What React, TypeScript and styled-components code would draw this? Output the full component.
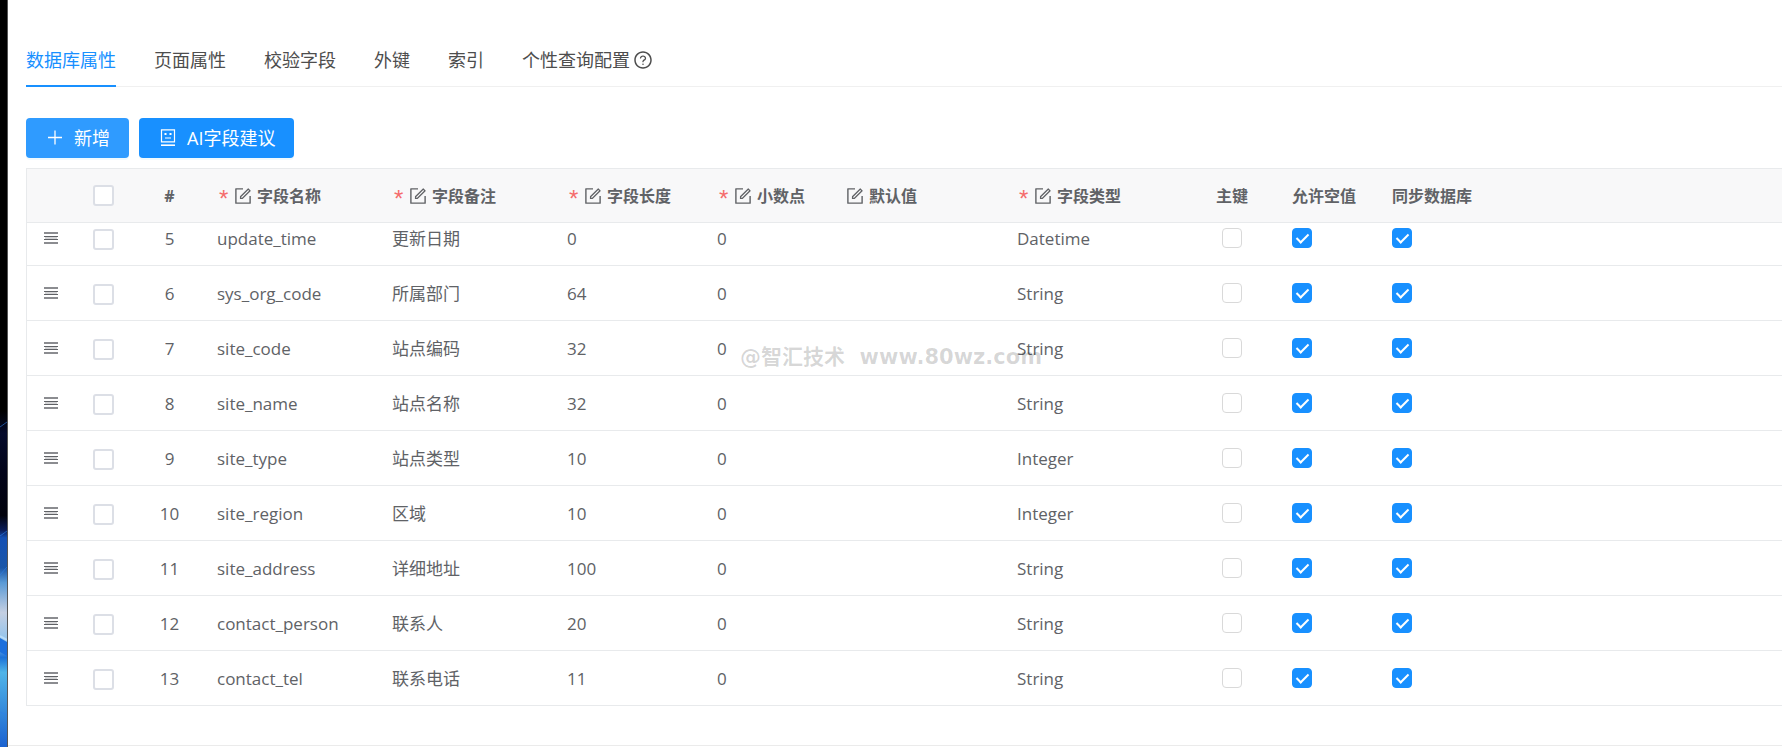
import React from "react";
import styled, { createGlobalStyle } from "styled-components";
import { AiOutlineQuestionCircle, AiOutlineForm } from "react-icons/ai";

const BLUE = "#1890ff";
const LINE = "#e8eaec";

const GlobalStyle = createGlobalStyle`
  *, *::before, *::after { box-sizing: border-box; }
  body {
    margin: 0;
    background: #fff;
    color: #606266;
    font-family: "Open Sans", "Noto Sans CJK SC", sans-serif;
    font-size: 17px;
    line-height: 24px;
    overflow-x: hidden;
  }
`;

const Page = styled.div`
  display: flex;
  min-height: 100vh;
`;

const Wallpaper = styled.aside`
  flex: none;
  width: 8px;
  border-right: 1px solid #555;
  background: #000;
  svg { display: block; width: 100%; height: 100vh; }
`;

const Panel = styled.main`
  position: relative;
  flex: 1;
  min-width: 0;
  padding: 36px 0 39px 18px;
  margin-bottom: 1px;
  border-bottom: 1px solid #ebebeb;
`;

const Tabs = styled.nav`
  display: flex;
  gap: 38px;
  border-bottom: 1px solid #f0f0f0;
  margin-bottom: 31px;
`;

const Tab = styled.button<{ $active?: boolean }>`
  display: flex;
  align-items: center;
  gap: 3px;
  height: 51px;
  margin-bottom: -1px;
  padding: 0 0 2px;
  border: 0;
  border-bottom: 2px solid ${(p) => (p.$active ? BLUE : "transparent")};
  background: none;
  color: ${(p) => (p.$active ? BLUE : "#4d4d4d")};
  font: inherit;
  font-size: 18px;
  white-space: nowrap;
  cursor: pointer;
`;

const Toolbar = styled.div`
  display: flex;
  gap: 10px;
  margin-bottom: 10px;
`;

const Button = styled.button<{ $hover?: boolean }>`
  display: flex;
  align-items: center;
  gap: 10px;
  height: 40px;
  padding: 0 19px 0 20px;
  border: 0;
  border-radius: 4px;
  background: ${(p) => (p.$hover ? "#2f9bff" : BLUE)};
  box-shadow: 0 2px 0 rgba(5, 175, 255, 0.06);
  color: #fff;
  font: inherit;
  font-size: 18px;
  white-space: nowrap;
  cursor: pointer;
`;

const TableFrame = styled.div`
  border: 1px solid ${LINE};
  border-width: 1px 0 0 1px;
  overflow: hidden;
`;

const Table = styled.table`
  width: 100%;
  table-layout: fixed;
  border-collapse: separate;
  border-spacing: 0;
`;

const HeadCell = styled.th<{ $center?: boolean }>`
  height: 54px;
  padding: 0 10px;
  border-bottom: 1px solid ${LINE};
  background: #f8f8f9;
  font-size: 16px;
  font-weight: 700;
  text-align: ${(p) => (p.$center ? "center" : "left")};
  white-space: nowrap;
`;

const HeadLabel = styled.span`
  display: flex;
  align-items: center;
  gap: 4px;
`;

const Star = styled.span`
  width: 12px;
  height: 12px;
  padding-left: 2px;
  color: #f56c6c;
  font-family: "Liberation Sans", sans-serif;
  font-weight: 400;
  font-size: 24px;
  line-height: 18px;
`;

/* The first row is partly scrolled under the header. */
const Row = styled.tr<{ $scrolled?: boolean }>`
  td {
    height: ${(p) => (p.$scrolled ? 43 : 55)}px;
    padding-bottom: ${(p) => (p.$scrolled ? 12 : 0)}px;
  }
`;

const Cell = styled.td<{ $center?: boolean }>`
  padding: 2px 10px 0;
  border-bottom: 1px solid ${LINE};
  text-align: ${(p) => (p.$center ? "center" : "left")};
  white-space: nowrap;
`;

const ControlCell = styled(Cell)`
  padding-top: 0;
  svg { display: block; margin: 0 auto; }
`;

const Select = styled.input`
  appearance: none;
  display: block;
  width: 21px;
  height: 21px;
  margin: 0 auto;
  border: 2px solid #dcdfe6;
  border-radius: 3px;
  background: #fff;
`;

const Check = styled.input<{ $center?: boolean }>`
  appearance: none;
  display: grid;
  place-items: center;
  width: 20px;
  height: 20px;
  margin: ${(p) => (p.$center ? "0 auto" : "0")};
  border: 1px solid #d9d9d9;
  border-radius: 4px;
  background: #fff;
  &:checked {
    border-color: ${BLUE};
    background: ${BLUE};
  }
  &:checked::after {
    content: "";
    width: 7px;
    height: 12px;
    margin-bottom: 3px;
    border: solid #fff;
    border-width: 0 2px 2px 0;
    transform: rotate(45deg);
  }
`;

const Watermark = styled.div`
  position: absolute;
  left: 732px;
  top: 341px;
  color: rgba(0, 0, 0, 0.16);
  font-family: "DejaVu Sans", "Noto Sans CJK SC", sans-serif;
  font-size: 21px;
  line-height: 32px;
  font-weight: 700;
  white-space: pre;
  pointer-events: none;
`;

const PlusIcon = () => (
  <svg width="18" height="18" viewBox="0 0 18 18" stroke="currentColor" strokeWidth="1.3" aria-hidden="true">
    <path d="M9 1.500v14M2 8.500h14" />
  </svg>
);

const RobotIcon = () => (
  <svg width="18" height="18" viewBox="0 0 18 18" fill="none" stroke="currentColor" strokeWidth="1.2" aria-hidden="true">
    <path d="M2.500 .8h13v12h-13zM6 9h6" />
    <path d="M5.500 5h2M10.500 5h2" strokeWidth="2" />
    <path d="M2 16.200h14" strokeWidth="1.600" />
  </svg>
);

const DragIcon = () => (
  <svg width="14" height="12" viewBox="0 0 14 12" aria-hidden="true">
    <path fill="#d5d5d7" d="M1 4h12v4H1z" />
    <path fill="#8b8c90" d="M0 0h14v2H0zM0 10h14v2H0z" />
    <path fill="#606266" d="M0 4h14v1H0zM0 7h14v1H0z" />
  </svg>
);

const WIDTHS = [48, 57, 75, 175, 175, 150, 128, 172, 175, 100, 100];

const FIELDS = [
  { label: "字段名称", required: true },
  { label: "字段备注", required: true },
  { label: "字段长度", required: true },
  { label: "小数点", required: true },
  { label: "默认值", required: false },
  { label: "字段类型", required: true },
];

const ROWS: [number, string, string, number, string][] = [
  [5, "update_time", "更新日期", 0, "Datetime"],
  [6, "sys_org_code", "所属部门", 64, "String"],
  [7, "site_code", "站点编码", 32, "String"],
  [8, "site_name", "站点名称", 32, "String"],
  [9, "site_type", "站点类型", 10, "Integer"],
  [10, "site_region", "区域", 10, "Integer"],
  [11, "site_address", "详细地址", 100, "String"],
  [12, "contact_person", "联系人", 20, "String"],
  [13, "contact_tel", "联系电话", 11, "String"],
];

export default function App() {
  return (
    <>
      <GlobalStyle />
      <Page>
        <Wallpaper>
          <svg viewBox="0 0 7 747" preserveAspectRatio="none" aria-hidden="true">
            <defs>
              <linearGradient id="sky" x1="0" y1="0" x2="0" y2="1">
                <stop offset="0.55" stopColor="#000" />
                <stop offset="0.58" stopColor="#050b2c" />
                <stop offset="0.63" stopColor="#02041a" />
                <stop offset="0.69" stopColor="#01020c" />
                <stop offset="0.71" stopColor="#0a1c58" />
                <stop offset="0.72" stopColor="#1450b4" />
                <stop offset="0.76" stopColor="#1a56a8" />
                <stop offset="0.78" stopColor="#5a9ad6" />
                <stop offset="0.82" stopColor="#c4cfe2" />
                <stop offset="0.86" stopColor="#8ec3ee" />
                <stop offset="0.88" stopColor="#1c72d8" />
                <stop offset="0.9" stopColor="#4fb4e8" />
                <stop offset="1" stopColor="#1b62d0" />
              </linearGradient>
            </defs>
            <rect width="7" height="747" fill="url(#sky)" />
            <path d="M0 427l7-5M0 536l7-5M0 575l7-8M0 712l7 3" stroke="#2f7fe6" strokeOpacity="0.6" />
            <path d="M0 638l7 4v14l-7-4z" fill="#1c6fdc" />
            <path d="M0 636l7 4" stroke="#b8dcf8" strokeWidth="2" />
          </svg>
        </Wallpaper>
        <Panel>
          <Tabs>
            <Tab $active>数据库属性</Tab>
            <Tab>页面属性</Tab>
            <Tab>校验字段</Tab>
            <Tab>外键</Tab>
            <Tab>索引</Tab>
            <Tab>
              个性查询配置
              <AiOutlineQuestionCircle size={20} />
            </Tab>
          </Tabs>
          <Toolbar>
            <Button $hover>
              <PlusIcon />
              新增
            </Button>
            <Button>
              <RobotIcon />
              AI字段建议
            </Button>
          </Toolbar>
          <TableFrame>
            <Table>
              <colgroup>
                {WIDTHS.map((w, i) => (
                  <col key={i} width={w} />
                ))}
                <col />
              </colgroup>
              <thead>
                <tr>
                  <HeadCell />
                  <HeadCell>
                    <Select type="checkbox" aria-label="全选" />
                  </HeadCell>
                  <HeadCell $center>#</HeadCell>
                  {FIELDS.map((f) => (
                    <HeadCell key={f.label}>
                      <HeadLabel>
                        {f.required && <Star>*</Star>}
                        <AiOutlineForm size={20} />
                        {f.label}
                      </HeadLabel>
                    </HeadCell>
                  ))}
                  <HeadCell $center>主键</HeadCell>
                  <HeadCell>允许空值</HeadCell>
                  <HeadCell>同步数据库</HeadCell>
                </tr>
              </thead>
              <tbody>
                {ROWS.map(([no, name, remark, length, type], i) => (
                  <Row key={no} $scrolled={i === 0}>
                    <ControlCell>
                      <DragIcon />
                    </ControlCell>
                    <Cell>
                      <Select type="checkbox" aria-label={name} />
                    </Cell>
                    <Cell $center>{no}</Cell>
                    <Cell>{name}</Cell>
                    <Cell>{remark}</Cell>
                    <Cell>{length}</Cell>
                    <Cell>0</Cell>
                    <Cell />
                    <Cell>{type}</Cell>
                    <ControlCell>
                      <Check $center type="checkbox" aria-label="主键" />
                    </ControlCell>
                    <ControlCell>
                      <Check type="checkbox" defaultChecked aria-label="允许空值" />
                    </ControlCell>
                    <ControlCell>
                      <Check type="checkbox" defaultChecked aria-label="同步数据库" />
                    </ControlCell>
                  </Row>
                ))}
              </tbody>
            </Table>
          </TableFrame>
          <Watermark>@智汇技术  www.80wz.com</Watermark>
        </Panel>
      </Page>
    </>
  );
}
